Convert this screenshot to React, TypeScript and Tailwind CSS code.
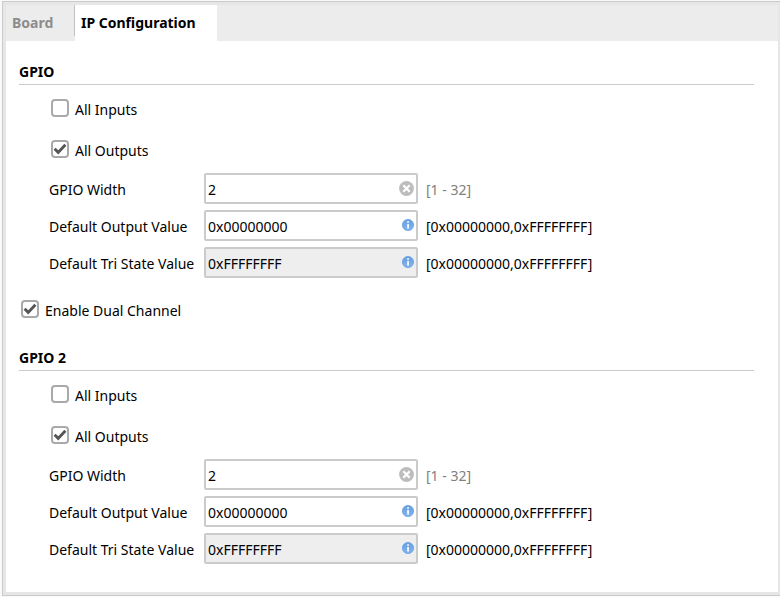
import { useId, useState } from 'react';

function CheckRow({ label, initial = false }: { label: string; initial?: boolean }) {
  const [checked, setChecked] = useState(initial);
  return (
    <label className="inline-flex items-center gap-1.5">
      <span className="grid h-[18px] w-[18px] shrink-0">
        <input
          type="checkbox"
          checked={checked}
          onChange={(e) => setChecked(e.target.checked)}
          className="col-start-1 row-start-1 h-[18px] w-[18px] appearance-none rounded-sm border-2 border-[#a9a9a9] bg-white"
        />
        {checked && (
          <svg viewBox="0 0 18 18" className="pointer-events-none col-start-1 row-start-1 h-[18px] w-[18px]" aria-hidden="true">
            <path d="M3.6 8.8 L7.2 12.4 L14.4 4.8" fill="none" stroke="#555" strokeWidth="2.9" />
          </svg>
        )}
      </span>
      <span className="pt-1">{label}</span>
    </label>
  );
}

function ClearIcon() {
  return (
    <svg viewBox="0 0 16 16" className="h-4 w-4" aria-hidden="true">
      <circle cx="8.5" cy="7.5" r="7.4" fill="#bdbdbd" />
      <path d="M5.3 4.3 L11.7 10.7 M11.7 4.3 L5.3 10.7" stroke="#fff" strokeWidth="2.2" />
    </svg>
  );
}

function InfoIcon() {
  return (
    <svg viewBox="0 0 12 12" className="h-3 w-3" aria-hidden="true">
      <defs>
        <linearGradient id="info-fill" x1="0" y1="0" x2="0" y2="1">
          <stop offset="0" stopColor="#659fdf" />
          <stop offset="1" stopColor="#82b4f7" />
        </linearGradient>
      </defs>
      <circle cx="6" cy="6" r="5.6" fill="url(#info-fill)" stroke="#6a9fe0" strokeWidth="0.8" />
      <rect x="5.2" y="2.2" width="1.7" height="1.6" fill="#fff" />
      <rect x="5.2" y="5" width="1.7" height="4.6" fill="#fff" />
    </svg>
  );
}

type FieldProps = { label: string; value: string; range: string; kind: 'clear' | 'info'; disabled?: boolean };

function Field({ label, value, range, kind, disabled = false }: FieldProps) {
  const id = useId();
  const [text, setText] = useState(value);
  return (
    <div className="flex items-center">
      <label htmlFor={id} className="w-[155px] shrink-0 pt-0.5 whitespace-nowrap">
        {label}
      </label>
      <div
        className={`flex h-[31px] w-[214px] shrink-0 items-center rounded-xs border-2 border-[#cbcbcb] pl-0.5 ${disabled ? 'bg-[#eeeeee]' : 'bg-white'}`}
      >
        <input
          id={id}
          type="text"
          value={text}
          disabled={disabled}
          onChange={(e) => setText(e.target.value)}
          className="min-w-0 flex-1 bg-transparent pt-0.5 outline-none"
        />
        {kind === 'clear' ? (
          <button type="button" aria-label="Clear" onClick={() => setText('')} className="mr-0.5">
            <ClearIcon />
          </button>
        ) : (
          <span className="mr-0.5 pb-0.5">
            <InfoIcon />
          </span>
        )}
      </div>
      <span className={`pt-0.5 pl-2 whitespace-nowrap ${kind === 'clear' ? 'text-[#808080]' : ''}`}>{range}</span>
    </div>
  );
}

function Channel({ title }: { title: string }) {
  return (
    <section>
      <h2 className="flex h-11 items-end border-b border-[#cbcbcb] pb-0.5 font-bold">{title}</h2>
      <div className="pt-0.5 pl-[30px]">
        <div className="flex flex-col pl-0.5">
          <div className="flex h-[41px] items-center">
            <CheckRow label="All Inputs" />
          </div>
          <div className="flex h-[41px] items-center">
            <CheckRow label="All Outputs" initial />
          </div>
        </div>
        <div className="flex flex-col gap-1.5 pt-1">
          <Field label="GPIO Width" value="2" range="[1 - 32]" kind="clear" />
          <Field label="Default Output Value" value="0x00000000" range="[0x00000000,0xFFFFFFFF]" kind="info" />
          <Field label="Default Tri State Value" value="0xFFFFFFFF" range="[0x00000000,0xFFFFFFFF]" kind="info" disabled />
        </div>
      </div>
    </section>
  );
}

export default function App() {
  return (
    <div className="flex min-h-screen bg-[#f9f9f9] pt-px pb-px pl-0.5 font-['Noto_Sans','Open_Sans',sans-serif] text-sm text-black">
      <div className="flex flex-1 flex-col border-y border-l border-[#cbcbcb] bg-[#e6e6e6] pt-[3px] pr-0.5 pb-[3px] pl-[3px]">
        <div className="flex flex-1 flex-col bg-white">
          <div role="tablist" className="flex h-9 bg-[#ececec] font-bold">
            <button type="button" role="tab" aria-selected="false" className="w-[68px] pl-1.5 text-left text-[#8c8c8c]">
              Board
            </button>
            <span className="h-[31px] w-px bg-[#c0c0c0]" />
            <button type="button" role="tab" aria-selected="true" className="w-[142px] bg-white pl-1.5 text-left">
              IP Configuration
            </button>
          </div>
          <main className="flex-1 pr-6 pl-[13px]">
            <Channel title="GPIO" />
            <div className="flex h-[49px] items-center pt-[13px] pl-0.5">
              <CheckRow label="Enable Dual Channel" initial />
            </div>
            <Channel title="GPIO 2" />
          </main>
        </div>
      </div>
    </div>
  );
}
